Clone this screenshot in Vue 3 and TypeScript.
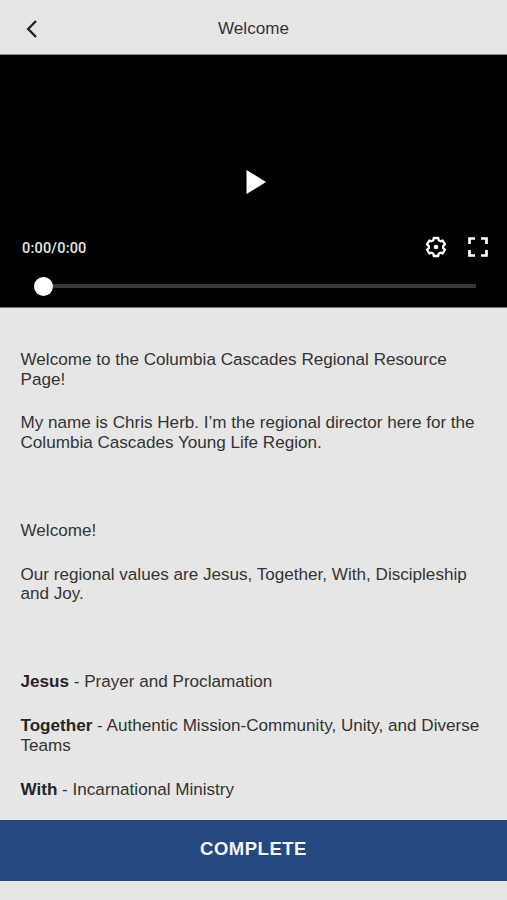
<script setup lang="ts">
import { ref } from 'vue'

interface Paragraph {
  lead?: string
  text: string
}

const title = 'Welcome'
const time = ref('0:00/0:00')
const paragraphs: Paragraph[] = [
  { text: 'Welcome to the Columbia Cascades Regional Resource Page!' },
  { text: 'My name is Chris Herb. I’m the regional director here for the Columbia Cascades Young Life Region.' },
  { text: '\u00a0' },
  { text: 'Welcome!' },
  { text: 'Our regional values are Jesus, Together, With, Discipleship and Joy.' },
  { text: '\u00a0' },
  { lead: 'Jesus', text: ' - Prayer and Proclamation' },
  { lead: 'Together', text: ' - Authentic Mission-Community, Unity, and Diverse Teams' },
  { lead: 'With', text: ' - Incarnational Ministry' },
]

// Outline of a six-toothed gear: [angle offset from the tooth axis, radius]
const tooth: [number, number][] = [[-21, 7.3], [-14, 9.3], [14, 9.3], [21, 7.3]]
const gear = [0, 1, 2, 3, 4, 5]
  .flatMap((k) =>
    tooth.map(([offset, r]) => {
      const a = ((k * 60 - 90 + offset) * Math.PI) / 180
      return `${(r * Math.cos(a)).toFixed(2)},${(r * Math.sin(a)).toFixed(2)}`
    }),
  )
  .join(' ')
</script>

<template>
  <div class="screen">
    <header class="header">
      <button class="back" aria-label="Back">
        <svg width="12" height="20" viewBox="0 0 12 20">
          <path d="M10 2 2.2 10 10 18" fill="none" stroke="#222" stroke-width="2.4" />
        </svg>
      </button>
      <h1 class="title">{{ title }}</h1>
    </header>

    <section class="player">
      <button class="play" aria-label="Play">
        <svg width="20" height="24" viewBox="0 0 20 24">
          <path d="M0.5 0 20 12 0.5 24Z" fill="#fff" />
        </svg>
      </button>
      <div class="controls">
        <span class="time">{{ time }}</span>
        <button class="control" aria-label="Settings">
          <svg width="24" height="24" viewBox="-12 -12 24 24">
            <polygon :points="gear" fill="none" stroke="#fff" stroke-width="2.3" stroke-linejoin="round" />
            <circle r="2.3" fill="#fff" />
          </svg>
        </button>
        <button class="control" aria-label="Fullscreen">
          <svg width="20" height="20" viewBox="0 0 20 20">
            <path d="M1.5 7V1.5H7M13 1.5h5.5V7M18.5 13v5.5H13M7 18.5H1.5V13" fill="none" stroke="#fff" stroke-width="2.7" />
          </svg>
        </button>
      </div>
      <div class="seek">
        <span class="thumb"></span>
        <span class="track"></span>
      </div>
    </section>

    <main class="content">
      <p v-for="(p, i) in paragraphs" :key="i"><strong v-if="p.lead">{{ p.lead }}</strong>{{ p.text }}</p>
    </main>

    <button class="complete">COMPLETE</button>
  </div>
</template>

<style>
body {
  margin: 0;
  background: #e6e6e6;
}
</style>

<style scoped>
.screen {
  display: flex;
  flex-direction: column;
  box-sizing: border-box;
  height: 900px;
  padding-bottom: 19px;
  overflow: hidden;
  background: #e6e6e6;
  color: #333;
  font-family: "Liberation Sans", Arial, sans-serif;
}
button {
  display: flex;
  padding: 0;
  border: 0;
  background: none;
  font-family: inherit;
}
svg {
  display: block;
}
.header {
  display: grid;
  grid-template-columns: 60px 1fr 60px;
  align-items: center;
  flex: none;
  height: 55px;
  padding-top: 3px;
  box-sizing: border-box;
  border-bottom: 1px solid #8c8c8c;
}
.back {
  padding-left: 26px;
}
.title {
  margin: 0;
  font-size: 17.1px;
  font-weight: 400;
  line-height: 20px;
  text-align: center;
}
.player {
  display: flex;
  flex-direction: column;
  flex: none;
  box-sizing: border-box;
  height: 253px;
  padding-top: 115px;
  border-bottom: 1px solid #777;
  background: #000;
}
.play {
  align-self: center;
  margin-left: 5px;
}
.controls {
  display: flex;
  align-items: center;
  height: 26px;
  margin-top: 40px;
  padding: 0 19px 0 22px;
  gap: 20px;
}
.time {
  flex: 1;
  padding-top: 3px;
  color: #e6e6e6;
  font-family: Roboto, sans-serif;
  font-size: 14.5px;
  font-weight: 500;
  letter-spacing: 0.2px;
}
.seek {
  display: flex;
  align-items: center;
  height: 20px;
  margin-top: 16px;
  padding: 0 31px 0 33.5px;
}
.thumb {
  width: 19px;
  height: 19px;
  border-radius: 50%;
  background: #fff;
}
.track {
  flex: 1;
  height: 4px;
  background: #383838;
}
.content {
  flex: 1;
  min-height: 0;
  padding: 42px 18px 0 20.5px;
  overflow: hidden;
}
.content p {
  margin: 0 0 24.45px;
  font-size: 17.1px;
  line-height: 19.5px;
}
.content strong {
  color: #252525;
}
.complete {
  flex: none;
  align-items: center;
  justify-content: center;
  height: 61px;
  padding-bottom: 3px;
  background: #25487f;
  color: #f4f7fc;
  font-size: 18.5px;
  font-weight: 700;
  letter-spacing: 0.5px;
}
</style>
